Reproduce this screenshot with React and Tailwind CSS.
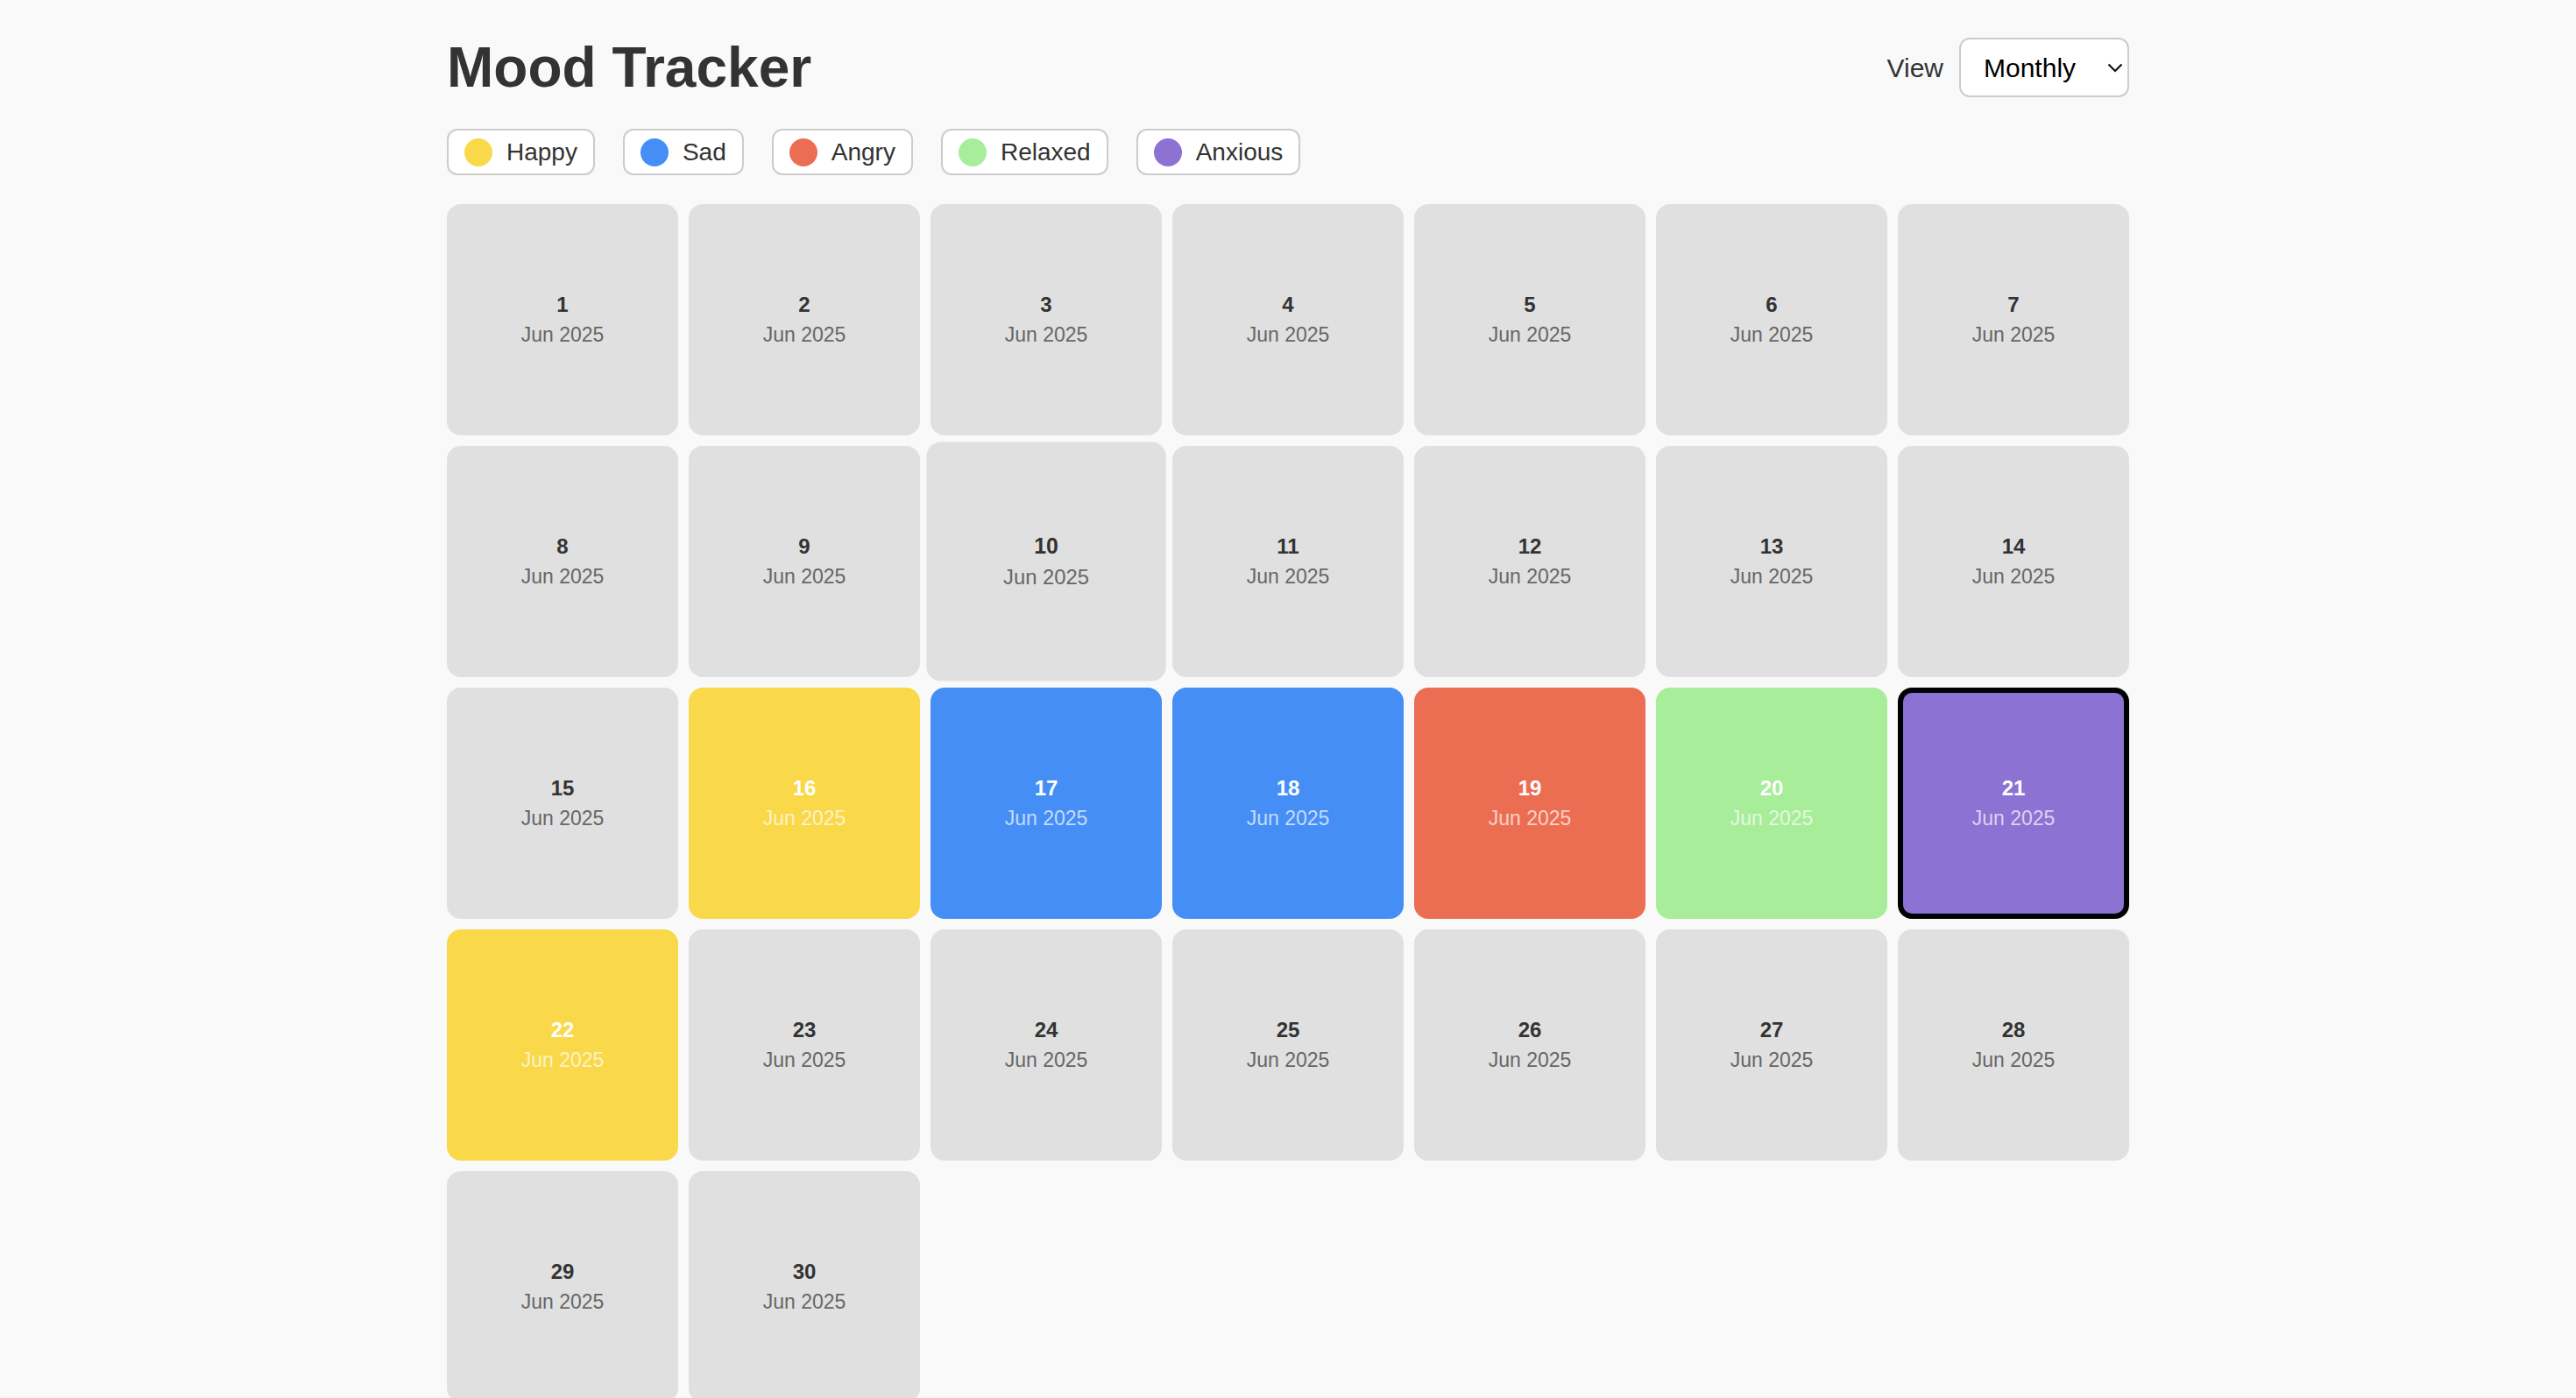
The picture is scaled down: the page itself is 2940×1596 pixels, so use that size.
import { useState } from "react";

const MOODS = [
  { key: "happy", label: "Happy", color: "bg-[#f9d84a]" },
  { key: "sad", label: "Sad", color: "bg-[#448ef6]" },
  { key: "angry", label: "Angry", color: "bg-[#ec6e52]" },
  { key: "relaxed", label: "Relaxed", color: "bg-[#a8ed99]" },
  { key: "anxious", label: "Anxious", color: "bg-[#8b72d3]" },
];

const moodColor = Object.fromEntries(MOODS.map((m) => [m.key, m.color]));

const ENTRIES = {
  16: "happy",
  17: "sad",
  18: "sad",
  19: "angry",
  20: "relaxed",
  21: "anxious",
  22: "happy",
};

const DayCell = ({ day, mood, selected, hovered }) => {
  const bg = mood ? moodColor[mood] : "bg-[#e0e0e0]";
  return (
    <div
      className={`h-[264px] rounded-[16px] flex flex-col items-center justify-center cursor-pointer transition-transform ${bg} ${
        selected ? "border-[6px] border-black" : ""
      } ${hovered ? "scale-[1.035]" : ""}`}
    >
      <span
        className={`text-[24px] leading-[28px] font-bold ${mood ? "text-white" : "text-[#333]"}`}
      >
        {day}
      </span>
      <span
        className={`text-[23px] leading-[28px] mt-[6px] ${mood ? "text-white/70" : "text-[#666]"}`}
      >
        Jun 2025
      </span>
    </div>
  );
};

const App = () => {
  const [view, setView] = useState("monthly");
  const days = Array.from({ length: 30 }, (_, i) => i + 1);

  return (
    <div className="min-h-screen bg-[#f9f9f9] font-['Liberation_Sans',Arial,sans-serif] text-[#333]">
      <div className="w-[1920px] mx-auto pt-[43px]">
        <div className="flex items-center justify-between h-[68px]">
          <h1 className="text-[64px] leading-[64px] font-bold text-[#333]">Mood Tracker</h1>
          <div className="flex items-center gap-[18px]">
            <label className="text-[30px] text-[#333]">View</label>
            <div className="relative">
              <select
                value={view}
                onChange={(e) => setView(e.target.value)}
                className="appearance-none h-[68px] w-[194px] pl-[26px] pr-[56px] text-[30px] text-black bg-white border-2 border-[#ccc] rounded-[12px] outline-none"
              >
                <option value="weekly">Weekly</option>
                <option value="monthly">Monthly</option>
              </select>
              <svg
                className="absolute right-[7px] top-[29px] pointer-events-none"
                width="18"
                height="11"
                viewBox="0 0 18 11"
                fill="none"
              >
                <polyline points="1.5,1.5 9,9 16.5,1.5" stroke="#111" strokeWidth="2.2" />
              </svg>
            </div>
          </div>
        </div>

        <div className="flex items-center gap-[32px] mt-[36px]">
          {MOODS.map((m) => (
            <div
              key={m.key}
              className="flex items-center gap-[16px] h-[53px] px-[18px] bg-white border-2 border-[#ccc] rounded-[12px]"
            >
              <span className={`w-[32px] h-[32px] rounded-full ${m.color}`}></span>
              <span className="text-[28px] text-[#333]">{m.label}</span>
            </div>
          ))}
        </div>

        <div className="grid grid-cols-7 gap-[12px] mt-[33px] pb-[12px]">
          {days.map((d) => (
            <DayCell key={d} day={d} mood={ENTRIES[d]} selected={d === 21} hovered={d === 10} />
          ))}
        </div>
      </div>
    </div>
  );
};

export default App;
